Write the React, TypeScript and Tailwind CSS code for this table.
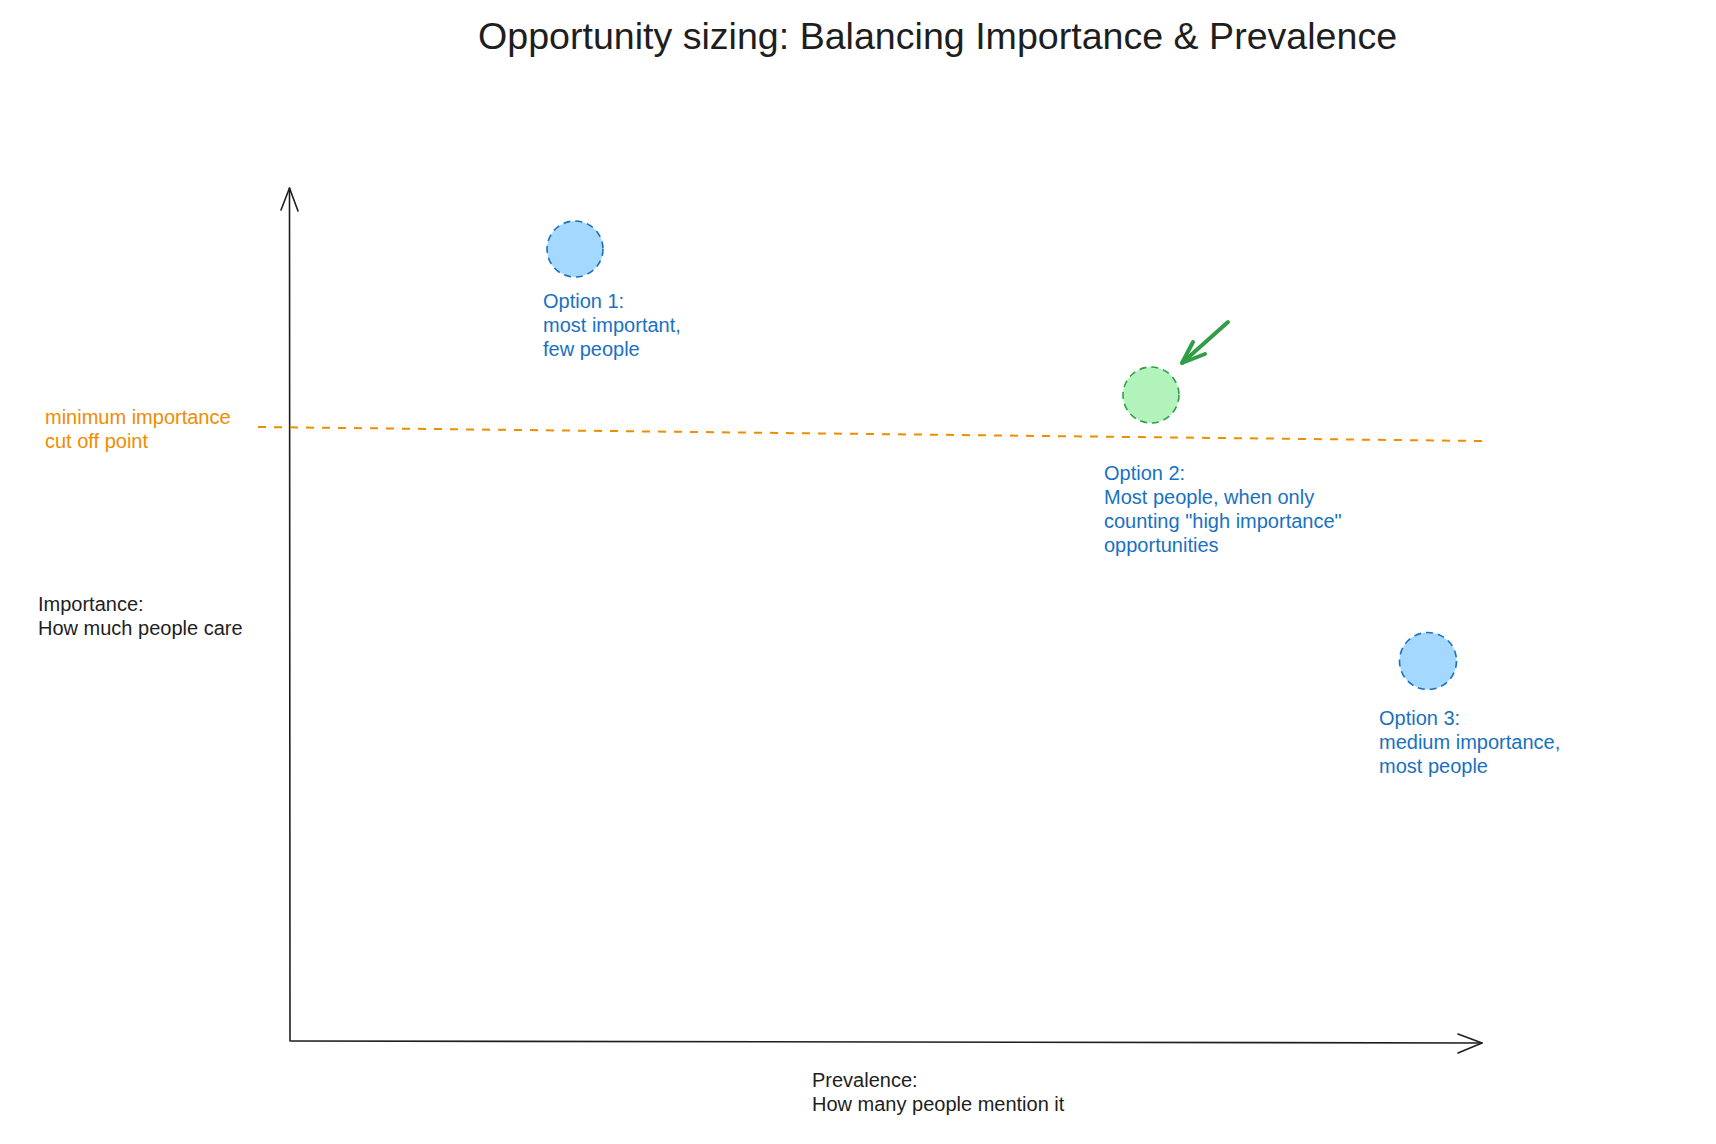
import React from 'react';

const font = { fontFamily: '"Liberation Sans", Arial, sans-serif' };

// labels sit on a free canvas, so each one is placed by its own coordinates
const Label = ({ x, y, color, lines }: { x: string; y: string; color: string; lines: string[] }) => (
  <div className={`absolute ${x} ${y} ${color} text-[20px] leading-[24px] whitespace-pre`}>
    {lines.map((l, i) => (
      <div key={i}>{l}</div>
    ))}
  </div>
);

export default function App() {
  return (
    <div className="relative w-[1716px] h-[1144px] bg-white overflow-hidden text-[#1e1e1e]" style={font}>
      <h1 className="absolute left-[478px] top-[13px] text-[37.6px] leading-[46px] font-normal whitespace-nowrap">
        Opportunity sizing: Balancing Importance &amp; Prevalence
      </h1>

      <svg className="absolute inset-0" width="1716" height="1144" viewBox="0 0 1716 1144" fill="none">
        {/* axes */}
        <g stroke="#1e1e1e" strokeWidth="1.6" strokeLinecap="round" strokeLinejoin="round">
          <path d="M290 1041 L289.5 188" />
          <path d="M281 210 L289.5 188 L298 211" />
          <path d="M291 1041 L1482 1043" />
          <path d="M1458 1034 L1482 1043 L1458 1053" />
        </g>

        {/* cut off line */}
        <path d="M258 427 L1482 441" stroke="#f08c00" strokeWidth="2" strokeDasharray="8 8" />

        {/* options */}
        <circle cx="575" cy="249" r="28" fill="#a5d8ff" stroke="#1971c2" strokeWidth="1.6" strokeDasharray="7 5" />
        <circle cx="1151" cy="395" r="28" fill="#b2f2bb" stroke="#2f9e44" strokeWidth="1.6" strokeDasharray="7 5" />
        <circle cx="1428" cy="661" r="28.5" fill="#a5d8ff" stroke="#1971c2" strokeWidth="1.6" strokeDasharray="7 5" />

        {/* pointer */}
        <g stroke="#2f9e44" strokeWidth="4" strokeLinecap="round" strokeLinejoin="round">
          <path d="M1228 322 L1182 363" />
          <path d="M1193 342 L1182 363 L1205 354" />
        </g>
      </svg>

      <Label x="left-[45px]" y="top-[405px]" color="text-[#f08c00]" lines={['minimum importance', 'cut off point']} />
      <Label x="left-[38px]" y="top-[592px]" color="text-[#1e1e1e]" lines={['Importance:', 'How much people care']} />
      <Label x="left-[812px]" y="top-[1068px]" color="text-[#1e1e1e]" lines={['Prevalence:', 'How many people mention it']} />

      <Label x="left-[543px]" y="top-[289px]" color="text-[#1971c2]" lines={['Option 1:', 'most important,', 'few people']} />
      <Label
        x="left-[1104px]"
        y="top-[461px]"
        color="text-[#1971c2]"
        lines={['Option 2:', 'Most people, when only', 'counting "high importance"', 'opportunities']}
      />
      <Label x="left-[1379px]" y="top-[706px]" color="text-[#1971c2]" lines={['Option 3:', 'medium importance,', 'most people']} />
    </div>
  );
}
